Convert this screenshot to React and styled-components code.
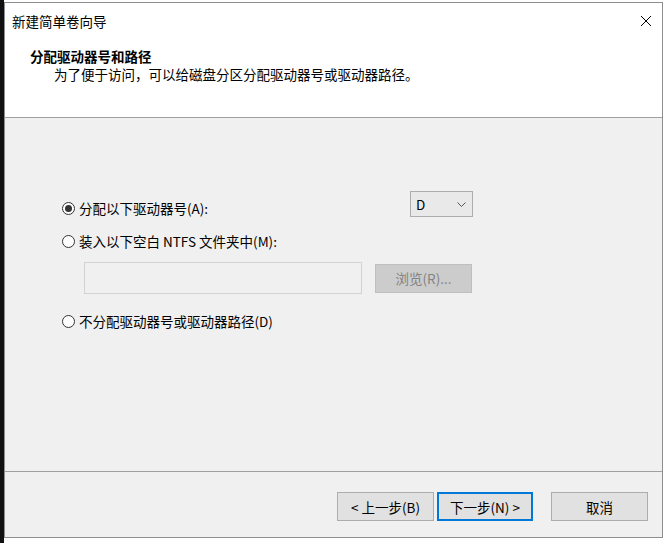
import styled, { createGlobalStyle } from "styled-components";

const GlobalStyle = createGlobalStyle`
    html, body {
        margin: 0;
        padding: 0;
        background: #ffffff;
    }
    body {
        font-family: "Noto Sans CJK SC", "Noto Sans", sans-serif;
        font-size: 13.5px;
        color: #000;
    }
`

const Screen = styled.div`
    display: flex;
    width: 667px;
    height: 543px;
    overflow: hidden;
`

const Strip = styled.div`
    width: 4px;
    background: #111;
    flex-shrink: 0;
`

const Dialog = styled.div`
    display: flex;
    flex-direction: column;
    width: 659px;
    height: 536px;
    margin-top: 2px;
    box-sizing: border-box;
    border: 1px solid #8e8e8e;
    background: #f0f0f0;
`

const Header = styled.div`
    height: 114px;
    background: #fff;
    border-bottom: 1px solid #a0a0a0;
`

const TitleBar = styled.div`
    display: flex;
    align-items: center;
    justify-content: space-between;
    height: 36px;
    padding: 0 10px 0 7px;
`

const Title = styled.span`
    line-height: 18px;
`

const Heading = styled.div`
    margin-top: 8px;
    padding-left: 25px;
    font-weight: 700;
    line-height: 18px;
`

const Subtitle = styled.div`
    padding-left: 49px;
    line-height: 18px;
`

const Content = styled.div`
    height: 354px;
    box-sizing: border-box;
    padding: 73px 0 0 57px;
    border-bottom: 1px solid #a0a0a0;
    display: flex;
    flex-direction: column;
`

const Row = styled.div`
    display: flex;
    align-items: ${p => p.$align || "center"};
    justify-content: ${p => p.$justify || "flex-start"};
    width: ${p => p.$width || "auto"};
    margin-top: ${p => p.$top || 0}px;
    padding-left: ${p => p.$indent || 0}px;
`

const Label = styled.label`
    display: flex;
    align-items: center;
    height: 18px;
    line-height: 18px;
    white-space: nowrap;
`

const Circle = styled.span`
    width: 13px;
    height: 13px;
    box-sizing: border-box;
    border: 1px solid #333;
    border-radius: 50%;
    margin-right: 4px;
    display: flex;
    align-items: center;
    justify-content: center;
    background: #fff;

    &::after {
        content: "";
        width: 7px;
        height: 7px;
        border-radius: 50%;
        background: ${p => (p.$checked ? "#333" : "transparent")};
    }
`

const Select = styled.div`
    width: 63px;
    height: 26px;
    box-sizing: border-box;
    border: 1px solid #adadad;
    background: #e9e9e9;
    display: flex;
    align-items: center;
    justify-content: space-between;
    padding: 0 6px 0 5px;
    align-self: flex-start;
`

const TextBox = styled.div`
    width: 278px;
    height: 32px;
    box-sizing: border-box;
    border: 1px solid #d3d3d3;
    background: #f0f0f0;
`

const Button = styled.div`
    width: ${p => p.$width || 96}px;
    height: 29px;
    box-sizing: border-box;
    display: flex;
    align-items: center;
    justify-content: center;
    background: ${p => (p.$disabled ? "#cccccc" : "#e1e1e1")};
    color: ${p => (p.$disabled ? "#838383" : "#000")};
    border: ${p => (p.$primary ? "2px solid #0078d7" : `1px solid ${p.$disabled ? "#bfbfbf" : "#adadad"}`)};
    margin-left: ${p => p.$gap || 0}px;
    white-space: nowrap;
`

const Footer = styled.div`
    flex: 1;
    display: flex;
    justify-content: flex-end;
    align-items: flex-start;
    padding: 20px 14px 0 0;
`

const Radio = ({ checked, children }) => (
    <Label>
        <Circle $checked={checked} />
        {children}
    </Label>
)

export default function App() {
    return (
        <>
            <GlobalStyle />
            <Screen>
                <Strip />
                <Dialog>
                    <Header>
                        <TitleBar>
                            <Title>新建简单卷向导</Title>
                            <svg width="12" height="12" viewBox="0 0 12 12">
                                <path d="M1 1 L11 11 M11 1 L1 11" stroke="#000" strokeWidth="1" fill="none" />
                            </svg>
                        </TitleBar>
                        <Heading>分配驱动器号和路径</Heading>
                        <Subtitle>为了便于访问，可以给磁盘分区分配驱动器号或驱动器路径。</Subtitle>
                    </Header>
                    <Content>
                        <Row $align="flex-end" $justify="space-between" $width="411px">
                            <Radio checked>分配以下驱动器号(A):</Radio>
                            <Select>
                                <span>D</span>
                                <svg width="9" height="5" viewBox="0 0 9 5">
                                    <path d="M0.5 0.5 L4.5 4.5 L8.5 0.5" stroke="#555" strokeWidth="1" fill="none" />
                                </svg>
                            </Select>
                        </Row>
                        <Row $top={15}>
                            <Radio>装入以下空白 NTFS 文件夹中(M):</Radio>
                        </Row>
                        <Row $top={12} $indent={22}>
                            <TextBox />
                            <Button $disabled $width={97} $gap={13}>浏览(R)...</Button>
                        </Row>
                        <Row $top={18}>
                            <Radio>不分配驱动器号或驱动器路径(D)</Radio>
                        </Row>
                    </Content>
                    <Footer>
                        <Button $width={97}>&lt; 上一步(B)</Button>
                        <Button $primary $gap={3}>下一步(N) &gt;</Button>
                        <Button $width={97} $gap={18}>取消</Button>
                    </Footer>
                </Dialog>
            </Screen>
        </>
    )
}
